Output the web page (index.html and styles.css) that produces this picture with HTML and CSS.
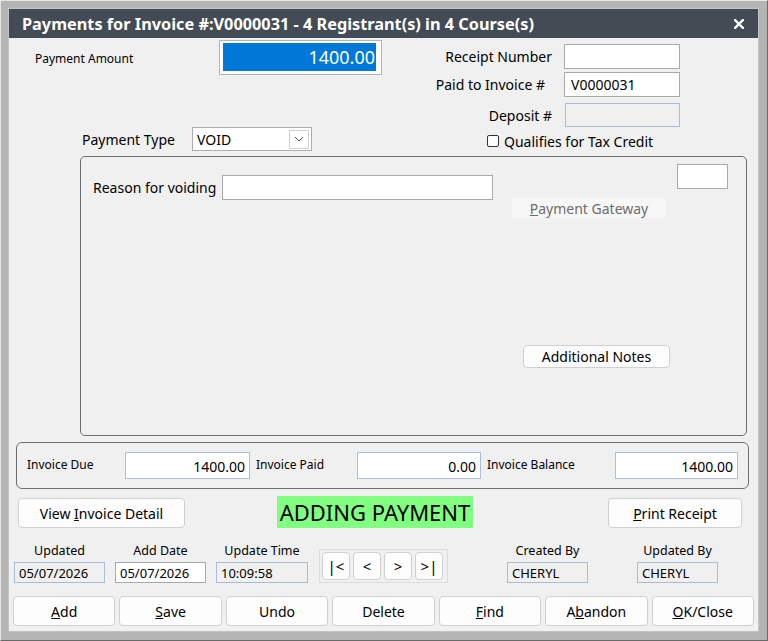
FILE: index.html
```html
<!DOCTYPE html>
<html lang="en">

<head>
    <meta charset="UTF-8">
    <meta name="viewport" content="width=device-width, initial-scale=1.0">
    <title>Payments</title>
    <link rel="stylesheet" href="styles.css">
</head>

<body>
    <div class="window">
        <div class="frame">
            <div class="titlebar">
                <span class="title">Payments for Invoice #:V0000031 - 4 Registrant(s) in 4 Course(s)</span>
                <svg class="close" width="10" height="10" viewBox="0 0 10 10">
                    <path d="M1 1 L9 9 M9 1 L1 9" stroke="#fff" stroke-width="2.4" stroke-linecap="square" />
                </svg>
            </div>

            <div class="content">
                <!-- top fields -->
                <div class="top">
                    <div class="top-left">
                        <div class="amount-row">
                            <span class="lbl-sm amount-lbl">Payment Amount</span>
                            <div class="amount-box">
                                <div class="amount-sel">1400.00</div>
                            </div>
                        </div>
                        <div class="type-row">
                            <span class="type-lbl">Payment Type</span>
                            <div class="select">
                                <span>VOID</span>
                                <span class="drop">
                                    <svg width="10" height="6" viewBox="0 0 10 6">
                                        <polyline points="1,1 5,5 9,1" fill="none" stroke="#555" stroke-width="1" />
                                    </svg>
                                </span>
                            </div>
                        </div>
                    </div>
                    <div class="top-right">
                        <div class="row">
                            <span class="row-lbl">Receipt Number</span>
                            <div class="field"></div>
                        </div>
                        <div class="row r2">
                            <span class="row-lbl pad">Paid to Invoice #</span>
                            <div class="field">V0000031</div>
                        </div>
                        <div class="row r3">
                            <span class="row-lbl">Deposit #</span>
                            <div class="field ro dep"></div>
                        </div>
                        <div class="check-row">
                            <span class="checkbox"></span>
                            <span>Qualifies for Tax Credit</span>
                        </div>
                    </div>
                </div>

                <!-- void group -->
                <div class="void-box">
                    <div class="reason">
                        <span class="reason-lbl">Reason for voiding</span>
                        <div class="field reason-input"></div>
                    </div>
                    <div class="void-side">
                        <div class="field small-input"></div>
                        <div class="btn disabled gateway"><span><u>P</u>ayment Gateway</span></div>
                        <div class="btn notes"><span>Additional Notes</span></div>
                    </div>
                </div>

                <!-- invoice totals -->
                <div class="inv-box">
                    <span class="lbl-sm inv-lbl due">Invoice Due</span>
                    <div class="field num due-in">1400.00</div>
                    <span class="lbl-sm inv-lbl paid">Invoice Paid</span>
                    <div class="field num paid-in">0.00</div>
                    <span class="lbl-sm inv-lbl bal">Invoice Balance</span>
                    <div class="field num bal-in">1400.00</div>
                </div>

                <div class="actions">
                    <div class="btn view"><span>View <u>I</u>nvoice Detail</span></div>
                    <div class="status">ADDING PAYMENT</div>
                    <div class="btn print"><span><u>P</u>rint Receipt</span></div>
                </div>

                <!-- record info -->
                <div class="info">
                    <div class="info-item w91">
                        <span>Updated</span>
                        <div class="info-in ro">05/07/2026</div>
                    </div>
                    <div class="info-item w91">
                        <span>Add Date</span>
                        <div class="info-in">05/07/2026</div>
                    </div>
                    <div class="info-item w92">
                        <span>Update Time</span>
                        <div class="info-in ro">10:09:58</div>
                    </div>
                    <div class="nav">
                        <div class="nav-btn">|&lt;</div>
                        <div class="nav-btn">&lt;</div>
                        <div class="nav-btn">&gt;</div>
                        <div class="nav-btn">&gt;|</div>
                    </div>
                    <div class="info-item w81 created">
                        <span>Created By</span>
                        <div class="info-in ro">CHERYL</div>
                    </div>
                    <div class="info-item w81 updated">
                        <span>Updated By</span>
                        <div class="info-in ro">CHERYL</div>
                    </div>
                </div>

                <div class="buttons">
                    <div class="btn"><span><u>A</u>dd</span></div>
                    <div class="btn"><span><u>S</u>ave</span></div>
                    <div class="btn"><span>Undo</span></div>
                    <div class="btn"><span>Delete</span></div>
                    <div class="btn"><span><u>F</u>ind</span></div>
                    <div class="btn"><span>A<u>b</u>andon</span></div>
                    <div class="btn"><span><u>O</u>K/Close</span></div>
                </div>
            </div>
        </div>
    </div>
</body>

</html>
```

FILE: styles.css
```css
* {
    margin: 0;
    padding: 0;
    box-sizing: border-box;
}

body {
    font-family: "Noto Sans", "Open Sans", sans-serif;
    font-size: 14px;
    color: #000;
    background: #b4b4b4;
}

.window {
    width: 768px;
    height: 641px;
    background: #b4b4b4;
    border: 1px solid;
    border-color: #e6e6e6 #6a6a6a #6a6a6a #e6e6e6;
    padding: 7px 8px 8px 7px;
}

.frame {
    height: 100%;
    border: 1px solid #c4c4c4;
    background: #f0f0f0;
    display: flex;
    flex-direction: column;
}

.titlebar {
    height: 29px;
    background: #434c54;
    display: flex;
    align-items: center;
    justify-content: space-between;
    padding: 0 14px 0 13px;
}

.title {
    color: #fff;
    font-weight: bold;
    font-size: 16.3px;
}

.content {
    flex: 1;
}

/* ---------- top ---------- */
.top {
    display: flex;
    height: 113px;
}

.top-left {
    width: 420px;
    padding-top: 2px;
}

.lbl-sm {
    font-size: 12px;
}

.amount-row {
    display: flex;
    align-items: center;
    padding-left: 26px;
}

.amount-lbl {
    width: 184px;
    margin-top: 2px;
}

.amount-box {
    width: 163px;
    height: 35px;
    border: 1px solid #b4b4b4;
    background: #fff;
    padding: 2px 5px 3px 3px;
}

.amount-sel {
    height: 100%;
    background: #0078d7;
    color: #fff;
    font-size: 18px;
    text-align: right;
    line-height: 28px;
    padding-right: 1px;
}

.type-row {
    display: flex;
    align-items: center;
    padding-left: 73px;
    margin-top: 52px;
}

.type-lbl {
    width: 110px;
}

.select {
    width: 120px;
    height: 24px;
    border: 1px solid #adadad;
    background: #fff;
    display: flex;
    align-items: center;
    justify-content: space-between;
    padding: 0 2px 0 4px;
}

.drop {
    width: 20px;
    height: 19px;
    border: 1px solid #cfcfcf;
    display: flex;
    align-items: center;
    justify-content: center;
}

.top-right {
    padding-top: 6px;
}

.row {
    display: flex;
    align-items: center;
}

.r2 {
    margin-top: 3px;
}

.r3 {
    margin-top: 6px;
}

.row-lbl {
    width: 123px;
    margin-right: 12px;
    text-align: right;
    white-space: nowrap;
}

.row-lbl.pad {
    padding-right: 7px;
}

.field {
    width: 116px;
    height: 25px;
    border: 1px solid #a9a9a9;
    background: #fff;
    padding: 0 6px;
    line-height: 23px;
}

.field.ro {
    background: #f0f0f0;
    border-color: #a8bdd4;
}

.dep {
    height: 24px;
    margin-left: 1px;
    width: 115px;
}

.check-row {
    display: flex;
    align-items: center;
    height: 12px;
    margin-top: 8px;
    padding-left: 58px;
    gap: 5px;
}

.checkbox {
    width: 12px;
    height: 12px;
    border: 1px solid #333;
    border-radius: 2px;
    background: #fff;
}

/* ---------- void group ---------- */
.void-box {
    margin: 5px 0 0 71px;
    width: 667px;
    height: 280px;
    border: 1px solid #6e6e6e;
    border-radius: 5px;
    display: flex;
    padding: 7px 0 0 12px;
}

.reason {
    display: flex;
    align-items: center;
    margin-top: 11px;
    height: 25px;
}

.reason-lbl {
    width: 129px;
    white-space: nowrap;
}

.reason-input {
    width: 271px;
}

.void-side {
    width: 235px;
    display: flex;
    flex-direction: column;
}

.small-input {
    width: 51px;
    align-self: flex-end;
}

.btn {
    background: #fdfdfd;
    border: 1px solid #d0d0d0;
    border-radius: 4px;
    display: flex;
    align-items: center;
    justify-content: center;
    white-space: nowrap;
}

.btn.disabled {
    background: #f7f7f7;
    border-color: #f0f0f0;
    color: #6d6d6d;
}

.gateway {
    width: 156px;
    height: 22px;
    margin: 8px 0 0 18px;
}

.notes {
    width: 147px;
    height: 23px;
    margin: 126px 0 0 30px;
}

/* ---------- invoice totals ---------- */
.inv-box {
    margin: 6px 0 0 7px;
    width: 733px;
    height: 47px;
    border: 1px solid #6e6e6e;
    border-radius: 6px;
    display: flex;
    align-items: center;
    padding-left: 10px;
}

.inv-lbl {
    margin-top: -3px;
}

.due {
    width: 98px;
}

.paid {
    width: 101px;
    margin-left: 6px;
}

.bal {
    width: 128px;
    margin-left: 6px;
}

.field.num {
    height: 27px;
    border-color: #a9c1dc;
    text-align: right;
    line-height: 27px;
    padding-right: 4px;
}

.due-in {
    width: 125px;
}

.paid-in {
    width: 124px;
}

.bal-in {
    width: 123px;
}

/* ---------- actions ---------- */
.actions {
    display: flex;
    align-items: flex-end;
    margin-top: 7px;
    padding-left: 9px;
}

.view {
    width: 167px;
    height: 30px;
}

.status {
    width: 196px;
    height: 32px;
    margin-left: 92px;
    background: #80ff80;
    font-size: 22px;
    text-align: center;
    line-height: 32px;
    white-space: nowrap;
}

.print {
    width: 134px;
    height: 30px;
    margin-left: 135px;
}

/* ---------- info ---------- */
.info {
    display: flex;
    align-items: flex-end;
    margin-top: 14px;
    padding-left: 5px;
}

.info-item {
    display: flex;
    flex-direction: column;
    align-items: center;
    font-size: 12.5px;
}

.info-item span {
    height: 18px;
    line-height: 18px;
    margin-bottom: 2px;
    white-space: nowrap;
}

.info-item + .info-item {
    margin-left: 10px;
}

.w91 {
    width: 91px;
}

.w92 {
    width: 92px;
}

.w81 {
    width: 81px;
}

.info-in {
    width: 100%;
    height: 21px;
    border: 1px solid #a9a9a9;
    background: #fff;
    padding-left: 4px;
    line-height: 20px;
    font-size: 13px;
}

.info-in.ro {
    background: #f0f0f0;
    border-color: #a8bdd4;
}

.nav {
    width: 129px;
    height: 34px;
    margin-left: 11px;
    border: 1px solid #dcdcdc;
    display: flex;
    gap: 3px;
    padding: 2px;
}

.nav-btn {
    width: 28px;
    height: 28px;
    background: #fdfdfd;
    border: 1px solid #d0d0d0;
    border-radius: 4px;
    display: flex;
    align-items: center;
    justify-content: center;
    font-size: 15px;
}

.info-item.created {
    margin-left: 59px;
}

.info-item.updated {
    margin-left: 49px;
}

/* ---------- bottom buttons ---------- */
.buttons {
    display: flex;
    gap: 4px;
    width: 745px;
    margin-top: 13px;
    padding-left: 4px;
}

.buttons .btn {
    flex: 1;
    height: 30px;
}
```
